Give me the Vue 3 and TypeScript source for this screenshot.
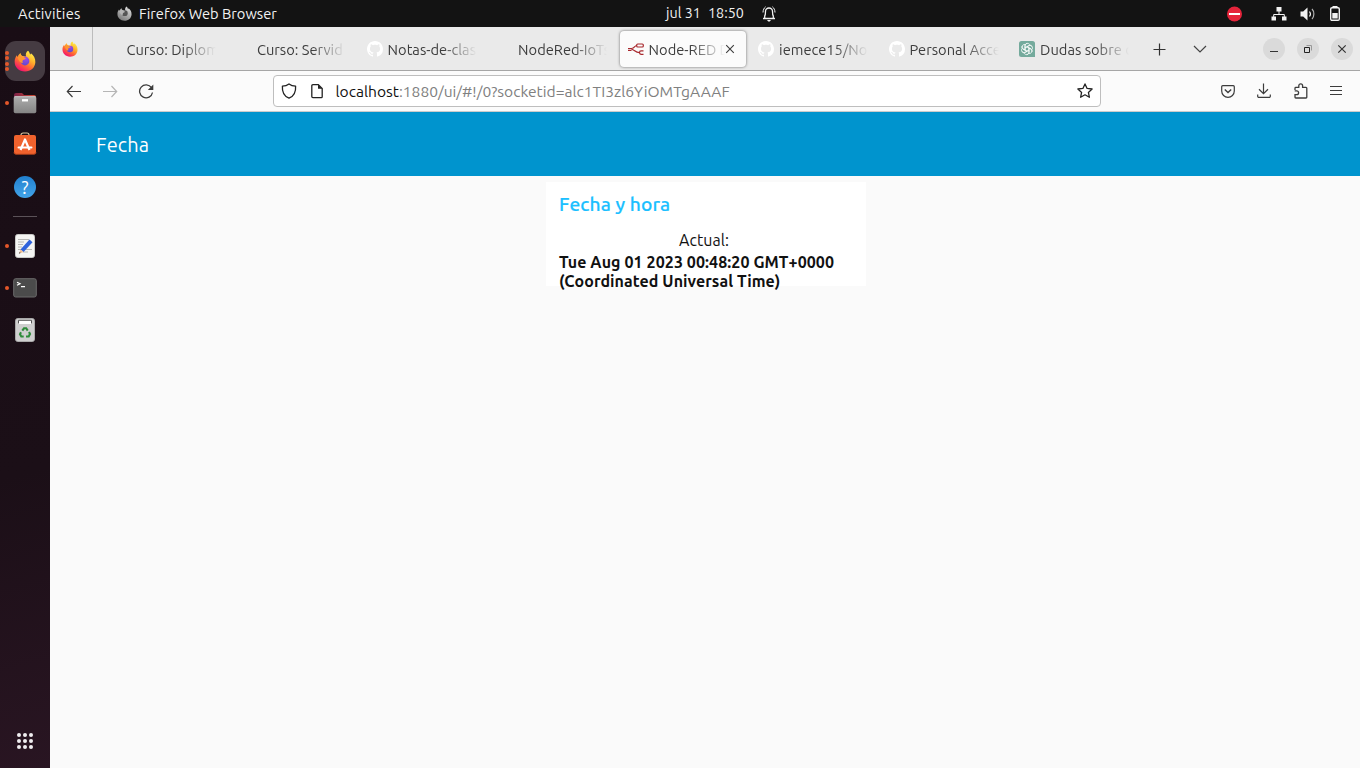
<script setup lang="ts">
interface Tab {
  title: string
  icon: 'none' | 'github' | 'nodered' | 'openai'
  active?: boolean
}

const tabs: Tab[] = [
  { title: 'Curso: Diplom', icon: 'none' },
  { title: 'Curso: Servid', icon: 'none' },
  { title: 'Notas-de-clas', icon: 'github' },
  { title: 'NodeRed-IoTs', icon: 'none' },
  { title: 'Node-RED D', icon: 'nodered', active: true },
  { title: 'iemece15/No', icon: 'github' },
  { title: 'Personal Acce', icon: 'github' },
  { title: 'Dudas sobre c', icon: 'openai' },
]
const petals = [0, 60, 120, 180, 240, 300]
const gridDots = [0, 1, 2, 3, 4, 5, 6, 7, 8]
</script>

<template>
  <div class="desktop">
    <svg class="defs" width="0" height="0" aria-hidden="true">
      <defs>
        <linearGradient id="fxBody" x1="0.85" y1="0.1" x2="0.3" y2="0.95">
          <stop offset="0" stop-color="#fff04a" />
          <stop offset="0.35" stop-color="#ffb42c" />
          <stop offset="0.65" stop-color="#ff6a33" />
          <stop offset="1" stop-color="#f5156c" />
        </linearGradient>
        <radialGradient id="fxGlobe" cx="0.6" cy="0.2" r="0.9">
          <stop offset="0" stop-color="#a04be8" />
          <stop offset="1" stop-color="#5a48c8" />
        </radialGradient>
        <linearGradient id="grayBody" x1="0.8" y1="0" x2="0.2" y2="1">
          <stop offset="0" stop-color="#e0e0e0" />
          <stop offset="1" stop-color="#777" />
        </linearGradient>
        <linearGradient id="folder" x1="0" y1="0" x2="0" y2="1">
          <stop offset="0" stop-color="#adadad" />
          <stop offset="1" stop-color="#858585" />
        </linearGradient>
        <linearGradient id="folderBack" x1="0" y1="0" x2="1" y2="0">
          <stop offset="0" stop-color="#7c2148" />
          <stop offset="1" stop-color="#d2492f" />
        </linearGradient>
        <symbol id="firefox" viewBox="0 0 24 24">
          <path fill="url(#fxBody)" d="M15.300 .8c1.300 1 1.900 2.600 2.200 4 .7-.2 1-1 1-1.300 2.900 2.300 5 5.500 4.800 9.900C22.900 19.500 18.300 23.500 12 23.500 5.600 23.500.7 19 .7 12.800c0-3 1-5.200 2.500-7.100.1 1 .3 1.500.7 2C4.500 5.900 5.700 4.300 7.300 3.400c0 1.400.6 2.500 1.700 3.100 1.500-.2 3 .1 4.200.7C12.300 4.500 13.300 2.200 15.300.8z" />
          <circle cx="12" cy="12" r="4.800" fill="url(#fxGlobe)" />
          <path fill="#ff9530" d="M3.900 8.200c1.700-1.600 4-1.900 5.900-.8.9.6 2.400.8 3.100 1.300-.2 1.600-2.500 1.600-3.400 2.700-.5 1-.3 1.900.3 2.600-2.400.6-4.800-1.900-5.900-5.800z" />
        </symbol>
        <symbol id="github" viewBox="0 0 16 16">
          <path fill="#fff" d="M8 0C3.580 0 0 3.580 0 8c0 3.540 2.290 6.530 5.470 7.590.4.07.55-.17.55-.38 0-.19-.01-.82-.01-1.490-2.010.37-2.530-.49-2.690-.94-.09-.23-.48-.94-.82-1.130-.28-.15-.68-.52-.01-.53.63-.01 1.080.58 1.230.82.72 1.210 1.870.87 2.330.66.07-.52.28-.87.51-1.070-1.780-.2-3.640-.89-3.640-3.950 0-.87.31-1.590.82-2.150-.08-.2-.36-1.020.08-2.120 0 0 .67-.21 2.200.82.64-.18 1.320-.27 2-.27s1.360.09 2 .27c1.530-1.040 2.200-.82 2.200-.82.44 1.100.16 1.920.08 2.120.51.56.82 1.270.82 2.150 0 3.070-1.870 3.750-3.650 3.950.29.25.54.73.54 1.480 0 1.070-.01 1.930-.01 2.200 0 .21.15.46.55.38A8.010 8.010 0 0 0 16 8c0-4.420-3.580-8-8-8z" />
        </symbol>
      </defs>
    </svg>

    <header class="topbar">
      <span class="activities">Activities</span>
      <svg class="app-icon" viewBox="0 0 24 24" width="15" height="15">
        <path fill="url(#grayBody)" d="M15.300 .8c1.300 1 1.900 2.600 2.200 4 .7-.2 1-1 1-1.300 2.900 2.300 5 5.500 4.800 9.900C22.900 19.500 18.300 23.500 12 23.500 5.600 23.500.7 19 .7 12.800c0-3 1-5.200 2.500-7.100.1 1 .3 1.500.7 2C4.500 5.900 5.700 4.300 7.300 3.400c0 1.400.6 2.500 1.700 3.100 1.500-.2 3 .1 4.200.7C12.300 4.500 13.300 2.200 15.300.8z" />
        <circle cx="12.500" cy="11.500" r="4.600" fill="#555" />
        <path fill="#b5b5b5" d="M3.900 8.200c1.700-1.600 4-1.900 5.900-.8.9.6 2.400.8 3.100 1.300-.2 1.600-2.500 1.600-3.400 2.700-.5 1-.3 1.900.3 2.600-2.400.6-4.800-1.900-5.900-5.800z" />
      </svg>
      <span class="app-name">Firefox Web Browser</span>
      <div class="clock"><span class="date">jul 31</span><span class="time">18:50</span>
        <svg class="bell" width="14" height="16" viewBox="0 0 14 16" fill="none" stroke="#f2f2f2">
          <path d="M1 12.500h12M2.700 12V10c.8-1 .8-2 .8-4.500a3.500 3.500 0 0 1 7 0c0 2.500 0 3.500.8 4.500v2" stroke-width="1.300" />
          <path d="M1 6.500C1.100 3.800 2 2 3.600 .8M13 6.500C12.900 3.800 12 2 10.400 .8" />
          <path d="M5 14h4l-1.200 1.500H6.200z" fill="#f2f2f2" stroke="none" />
        </svg>
      </div>
      <div class="status">
        <svg width="16" height="16" viewBox="0 0 16 16"><circle cx="7.500" cy="8" r="7.500" fill="#e5243b" /><path d="M2 8h11" stroke="#fff" stroke-width="2" /></svg>
        <svg class="net" width="16" height="14" viewBox="0 0 16 14"><path fill="#f2f2f2" d="M5.500 0h5v4.500h-5zM0.500 9.500h4.500v4H.5zM11 9.500h4.500v4H11z" /><path d="M8 4v3.500M2.700 10V7.500h10.600V10" fill="none" stroke="#f2f2f2" /></svg>
        <svg class="vol" width="16" height="14" viewBox="0 0 16 14"><path fill="#f2f2f2" d="M.5 4.500h2.700L7.500.5v13L3.200 9.500H.5z" /><path d="M9.500 4.500c1 1.300 1 3.700 0 5" stroke="#f2f2f2" stroke-width="1.200" fill="none" /><path d="M12 2c2.500 2.600 2.500 7.400 0 10" stroke="#b0b0b0" stroke-width="1.200" fill="none" /></svg>
        <svg class="bat" width="10" height="15" viewBox="0 0 10 15"><rect x=".7" y="1.700" width="8.600" height="12.600" rx="1.300" fill="none" stroke="#f2f2f2" stroke-width="1.400" /><path fill="#f2f2f2" d="M2.500 0h5v1.500h-5zM2.300 7h5.400v5.500H2.300z" /></svg>
      </div>
    </header>

    <div class="main">
      <nav class="dock">
        <div class="item current">
          <span class="dots"><i /><i /><i /><i /></span>
          <svg width="22" height="22"><use href="#firefox" /></svg>
        </div>
        <div class="item files">
          <span class="dots"><i /></span>
          <svg width="24" height="22" viewBox="0 0 24 22">
            <path fill="url(#folderBack)" d="M1 3a2 2 0 0 1 2-2h6l2 2h10a2 2 0 0 1 2 2v5H1z" />
            <rect x=".7" y="4.200" width="22.600" height="17" rx="1.800" fill="url(#folder)" />
            <path d="M1.500 4.700h21" stroke="#c4c4c4" /><path d="M9 8.300h6" stroke="#fff" stroke-width="2.300" />
          </svg>
        </div>
        <div class="item software">
          <svg width="24" height="23" viewBox="0 0 24 23">
            <path d="M8 4V3a2 2 0 0 1 2-2h4a2 2 0 0 1 2 2v1" fill="none" stroke="#d8c7a0" stroke-width="1.200" />
            <rect x="1" y="3" width="22" height="19" rx="2" fill="#f0622d" /><path d="M1 20.500c0 1 .8 1.700 2 1.700h18c1.200 0 2-.7 2-1.700" stroke="#c94b1d" fill="none" />
            <path d="M7.500 18 12 7.500 16.500 18" fill="none" stroke="#fff" stroke-width="2.200" stroke-linejoin="round" /><path d="M5.500 15.500h13" stroke="#fff" stroke-width="2" stroke-linecap="round" />
          </svg>
        </div>
        <div class="item help"><span class="question">?</span></div>
        <div class="rule" />
        <div class="item editor">
          <span class="dots"><i /></span>
          <svg width="20" height="24" viewBox="0 0 20 24">
            <rect x=".5" y=".5" width="19" height="23" rx="2.200" fill="#f5f5f3" stroke="#c9c9c7" />
            <path d="M3 5.500h11M3 8h6M3 10.500h5M3 13h4M3 15.500h14M8 18h5" stroke="#b8b8b5" />
            <path d="M5.500 15.500 14.500 5.500l3 2.800L8.600 18z" fill="#2f63dc" /><path d="M5.500 15.500 8.600 18 4 19.500z" fill="#eebc91" /><path d="m4.700 18-.9 1.700 1.900-.7z" fill="#444" />
          </svg>
        </div>
        <div class="item terminal">
          <span class="dots"><i /></span>
          <svg width="24" height="20" viewBox="0 0 24 20">
            <rect x=".7" y=".7" width="22.600" height="18.300" rx="2" fill="#4b4b4b" stroke="#6b6b6b" />
            <path d="m4 4.300 3 1.500L4 7.300M8 8.700h4" fill="none" stroke="#fff" stroke-width="1.200" />
          </svg>
        </div>
        <div class="item trash">
          <svg width="20" height="24" viewBox="0 0 20 24">
            <rect x=".5" y=".5" width="19" height="23" rx="2.300" fill="#cfcfcf" stroke="#a9a9a9" />
            <rect x="3" y="2" width="14" height="4" rx=".5" fill="#fff" /><path d="M3.500 5.500V2.300h13v3.200" fill="none" stroke="#555" />
            <g fill="none" stroke="#2e8b3a" stroke-width="2.100"><path d="M7.300 12.700 9 10.300h2.200l1.500 2.300" /><path d="m14 14 1 2-1.300 2.500H11" /><path d="M8.700 18.500H6.300L5 16.200l1-1.900" /></g>
          </svg>
        </div>
        <div class="apps"><i v-for="d in gridDots" :key="d" /></div>
      </nav>

      <section class="browser">
        <div class="tabbar">
          <div class="pinned"><svg width="16" height="16"><use href="#firefox" /></svg></div>
          <div class="tabs">
            <div v-for="tab in tabs" :key="tab.title" class="tab" :class="{ active: tab.active }">
              <div class="tab-inner">
                <span class="favicon">
                  <svg v-if="tab.icon === 'github'" width="16" height="16"><use href="#github" /></svg>
                  <svg v-else-if="tab.icon === 'nodered'" width="16" height="16" viewBox="0 0 16 16" fill="none" stroke="#a8282d" stroke-width="1.200">
                    <path d="M0 7.500h3.500C7 7.500 6 4.500 9 4.500M0 9.300h3.500M3.500 8.300c3 0 3.500 3.300 8 3.300" /><rect x="8.700" y="3" width="6.600" height="3" rx="1" /><path d="M15.500 9.800H13c-1.500 0-1.500 1.800-1.500 1.800s0 1.700 1.500 1.700h2.500" />
                  </svg>
                  <svg v-else-if="tab.icon === 'openai'" width="16" height="16" viewBox="0 0 16 16">
                    <path d="M2.500 0h11A2.500 2.500 0 0 1 16 2.500V16H2.500A2.500 2.500 0 0 1 0 13.500v-11A2.500 2.500 0 0 1 2.500 0z" fill="#74aa9c" />
                    <g fill="none" stroke="#fff" stroke-width=".75"><path v-for="a in petals" :key="a" :transform="`rotate(${a} 8 8)`" d="M6.200 9V4.800C6.200 2 9.800 1.600 10.900 3.900M6.200 6.600 9.800 4.500C11 3.800 12.500 4.500 13 5.500" /></g>
                  </svg>
                </span>
                <span class="tab-title">{{ tab.title }}</span>
                <svg v-if="tab.active" class="close" width="10" height="10" viewBox="0 0 10 10"><path d="m1.200 1.200 7.600 7.600M8.800 1.200 1.200 8.800" stroke="#3c3c3c" stroke-width="1.100" /></svg>
              </div>
            </div>
          </div>
          <svg class="plus" width="14" height="14" viewBox="0 0 14 14"><path d="M6.500 1.500v12M.5 7.500h12" stroke="#333" stroke-width="1.200" /></svg>
          <svg class="chev" width="14" height="8" viewBox="0 0 14 8"><path d="m1 1 6 6 6-6" stroke="#444" stroke-width="1.200" fill="none" /></svg>
          <div class="wins">
            <span><svg width="10" height="10" viewBox="0 0 10 10"><path d="M1 7.500h8" stroke="#333" /></svg></span>
            <span><svg width="10" height="10" viewBox="0 0 10 10" fill="none"><path d="M1.500 3.500h5v5h-5z" stroke="#222" /><path d="M3.500 1.500h5v5" stroke="#999" /></svg></span>
            <span><svg width="10" height="10" viewBox="0 0 10 10"><path d="m1.300 1.300 7.400 7.400M8.700 1.300 1.300 8.700" stroke="#333" stroke-width="1.200" /></svg></span>
          </div>
        </div>

        <div class="toolbar">
          <svg class="back" width="16" height="14" viewBox="0 0 16 14" fill="none" stroke="#3c3c3c" stroke-width="1.200"><path d="M15 7.500H1.500M6.500 2 1.300 7.500 6.500 13" /></svg>
          <svg class="fwd" width="16" height="14" viewBox="0 0 16 14" fill="none" stroke="#b5b5b5" stroke-width="1.200"><path d="M1 7.500h13.500M9.500 2l5.200 5.500L9.500 13" /></svg>
          <svg class="reload" width="16" height="16" viewBox="0 0 16 16"><path d="M13.500 4.700A6.500 6.500 0 1 0 14.500 9.500" fill="none" stroke="#3c3c3c" stroke-width="1.300" /><path d="M15.300 1.500v5.500H9.800z" fill="#3c3c3c" /></svg>
          <div class="urlbar">
            <svg class="shield" width="16" height="16" viewBox="0 0 16 16"><path d="M8 .9C6 2.400 3.800 3 1.400 3.100 1 8.500 2.500 13 8 15.200 13.500 13 15 8.500 14.600 3.100 12.200 3 10 2.400 8 .9z" fill="none" stroke="#222" stroke-width="1.300" stroke-linejoin="round" /></svg>
            <svg class="page" width="14" height="16" viewBox="0 0 14 16"><path d="M2.900 1.600h5.400l3.900 3.900v8.200a.9.900 0 0 1-.9.900H2.900a1.100 1.100 0 0 1-1.100-1.100V2.700a1.100 1.100 0 0 1 1.100-1.100z" fill="none" stroke="#222" stroke-width="1.300" /><path d="M8 1.600v4.200h4.200z" fill="#222" /></svg>
            <span class="url"><b>localhost</b>:1880/ui/#!/0?socketid=alc1TI3zl6YiOMTgAAAF</span>
            <svg class="star" width="16" height="16" viewBox="0 0 16 16"><path d="m8 .9 2.100 4.500 5 .6-3.700 3.400 1 4.900L8 11.800l-4.400 2.500 1-4.900L.9 6l5-.6z" fill="none" stroke="#222" stroke-width="1.300" stroke-linejoin="round" /></svg>
          </div>
          <svg class="pocket" width="14" height="13" viewBox="0 0 14 13" fill="none" stroke="#3c3c3c" stroke-width="1.200"><path d="M1.700.7h10.600a1 1 0 0 1 1 1v4.300a6.300 6.300 0 0 1-12.600 0V1.700a1 1 0 0 1 1-1z" /><path d="m3.800 4.500 3.200 3 3.200-3" stroke-width="1.400" /></svg>
          <svg class="down" width="14" height="16" viewBox="0 0 14 16" fill="none" stroke="#3c3c3c" stroke-width="1.200"><path d="M6.500 .5v10M2 6.200l4.500 4.400L11 6.200M.7 11.500v1.700a1.200 1.200 0 0 0 1.200 1.200h10.200a1.200 1.200 0 0 0 1.200-1.200v-1.700" /></svg>
          <svg class="ext" width="14" height="16" viewBox="0 0 14 16" fill="none" stroke="#3c3c3c" stroke-width="1.300"><path d="M1 7V5.200a.8.800 0 0 1 .8-.8h3V2.800a1.900 1.900 0 0 1 3.800 0v1.600H12a.8.800 0 0 1 .8.800v9a.8.800 0 0 1-.8.800H1.800a.8.800 0 0 1-.8-.8v-2.500h1.700a1.900 1.900 0 0 0 0-3.800H.7" /></svg>
          <svg class="menu" width="12" height="10" viewBox="0 0 12 10"><path d="M0 .5h12M0 4.500h12M0 8.500h12" stroke="#3c3c3c" stroke-width="1.100" /></svg>
        </div>

        <div class="app-header"><h1>Fecha</h1></div>
        <main class="page-body">
          <div class="card">
            <h2>Fecha y hora</h2>
            <p class="label">Actual:</p>
            <p class="value">Tue Aug 01 2023 00:48:20 GMT+0000<br>(Coordinated Universal Time)</p>
          </div>
        </main>
      </section>
    </div>
  </div>
</template>

<style>
body { margin: 0; overflow: hidden; }
</style>

<style scoped>
* { box-sizing: border-box; }
.desktop { width: 1360px; height: 768px; display: flex; flex-direction: column; font-family: Ubuntu, "Noto Sans", sans-serif; font-size: 14.67px; overflow: hidden; }
.defs { position: absolute; }
svg { display: block; flex: none; }
span, h1, h2, p { white-space: nowrap; }

.topbar { height: 27px; flex: none; background: #131313; color: #f2f2f2; display: flex; align-items: center; padding-left: 18px; line-height: 27px; }
.activities { width: 99px; letter-spacing: 0.25px; }
.app-icon { margin-right: 7px; }
.app-name { width: 527px; }
.clock { display: flex; align-items: center; height: 26px; width: 111px; }
.date { width: 42px; font-size: 14.300px; }
.time { width: 54px; font-size: 14.300px; }
.status { display: flex; align-items: center; margin-left: 450px; height: 26px; }
.net { margin-left: 28px; }
.vol { margin-left: 13px; }
.bat { margin-left: 14px; }

.main { flex: 1; display: flex; min-height: 0; }
.dock { width: 50px; flex: none; background: linear-gradient(165deg, #190d15 0%, #1b0f17 60%, #291522 100%); display: flex; flex-direction: column; align-items: center; padding-top: 14px; }
.item { width: 40px; height: 40px; flex: none; display: flex; align-items: center; justify-content: center; position: relative; }
.current { background: #453b42; border-radius: 11px; }
.dots { position: absolute; left: 0; top: 0; height: 100%; display: flex; flex-direction: column; justify-content: center; gap: 1.500px; }
.dots i { width: 4px; height: 4px; border-radius: 50%; background: #e4572a; }
.files { margin-top: 2px; }
.software { margin-top: 0; }
.help { margin-top: 4px; }
.question { width: 22px; height: 22px; border-radius: 50%; background: linear-gradient(#2180cf, #43a4e9); color: #fff; font-size: 18px; line-height: 22px; text-align: center; }
.rule { width: 24px; height: 1px; flex: none; background: #5b5258; margin: 9px 0; }
.terminal { margin-top: 2px; }
.trash { margin-top: 2px; }
.apps { margin-top: auto; margin-bottom: 19px; display: grid; grid-template-columns: repeat(3, 4px); gap: 2px; }
.apps i { width: 4px; height: 4px; border-radius: 50%; background: #f0eef0; }

.browser { flex: 1; min-width: 0; display: flex; flex-direction: column; background: #fafafa; }
.tabbar { height: 44px; flex: none; background: #eaeaea; border-bottom: 1px solid #a6a6a6; display: flex; align-items: center; }
.pinned { width: 43px; height: 43px; border-right: 1px solid #bcbcbc; display: flex; align-items: center; padding-left: 12px; }
.tabs { display: flex; margin-left: 2.600px; width: 1044.400px; }
.tab { width: 130.500px; flex: none; padding: 0 2px; }
.tab-inner { height: 36px; margin-top: 1px; width: 126.300px; border-radius: 4px; padding-left: 8px; display: flex; align-items: center; color: #3d3d3d; }
.active .tab-inner { background: #fbfbfb; box-shadow: 0 0 3px rgba(0, 0, 0, 0.55); }
.favicon { width: 16px; height: 16px; margin-right: 5px; flex: none; }
.tab-title { width: 95px; margin-top: 2px; line-height: 22px; -webkit-mask-image: linear-gradient(90deg, #000 55px, transparent 89px); mask-image: linear-gradient(90deg, #000 55px, transparent 89px); }
.active .tab-title { width: 76px; -webkit-mask-image: linear-gradient(90deg, #000 42px, transparent 76px); mask-image: linear-gradient(90deg, #000 42px, transparent 76px); }
.plus { margin-left: 13px; }
.chev { margin-left: 26px; }
.wins { display: flex; gap: 12px; margin-left: auto; margin-right: 7px; }
.wins span { width: 22px; height: 22px; border-radius: 50%; background: #dadada; display: flex; align-items: center; justify-content: center; }

.toolbar { height: 41px; flex: none; background: #fbfbfb; border-bottom: 1px solid #ccc; display: flex; align-items: center; padding-left: 16px; }
.fwd { margin-left: 20px; }
.reload { margin-left: 20px; }
.urlbar { width: 828px; height: 32px; border: 1px solid #bebebe; border-radius: 4px; background: #fff; margin-left: 119px; display: flex; align-items: center; padding: 0 7px; color: #808080; }
.page { margin-left: 13px; }
.url { margin-left: 11.500px; margin-top: -1px; font-size: 15.600px; line-height: 22px; }
.url b { font-weight: 400; color: #111; }
.star { margin-left: auto; }
.pocket { margin-left: 120px; }
.down { margin-left: 22px; }
.ext { margin-left: 23px; }
.menu { margin-left: 22px; }

.app-header { height: 64px; flex: none; background: #0094ce; padding-left: 46px; display: flex; align-items: center; }
h1 { margin: 0; color: #fff; font-size: 20px; font-weight: 400; letter-spacing: 0.15px; }
.page-body { flex: 1; padding: 6px 0 0 496px; }
.card { width: 320px; height: 104px; background: #fff; padding: 9px 13px 0; color: #111; }
h2 { margin: 0; font-size: 19.200px; font-weight: 500; line-height: 26px; letter-spacing: 0.100px; color: #1bbfff; -webkit-text-stroke: 0.200px #1bbfff; }
.label { margin: 13px 0 0; padding-left: 120px; font-size: 16px; line-height: 20px; letter-spacing: 0.050px; }
.value { margin: 3px 0 0; font-size: 16px; line-height: 19px; font-weight: 700; letter-spacing: 0.080px; }
</style>
